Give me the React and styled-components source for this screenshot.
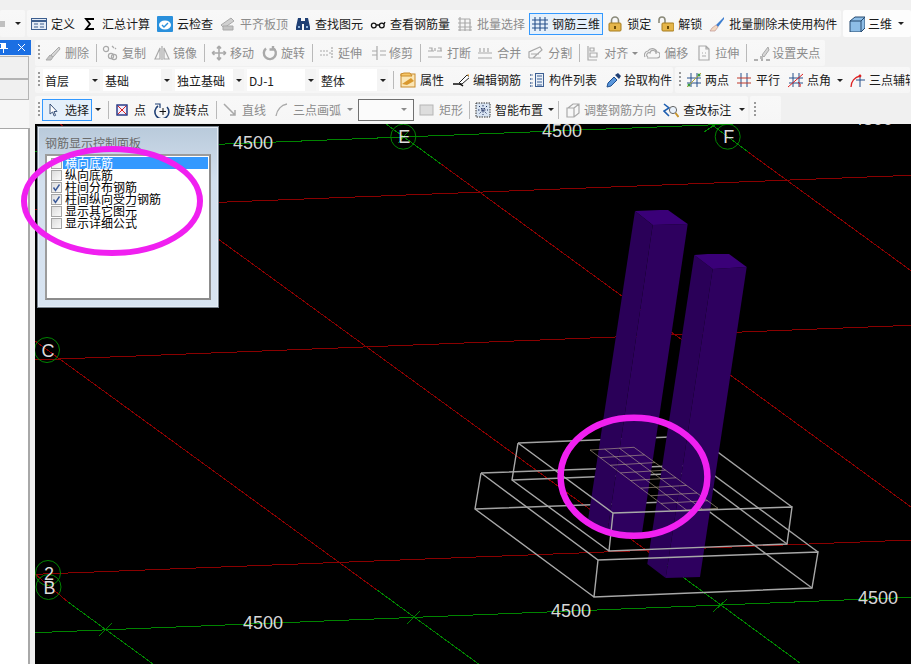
import React from "react";
import styled, { createGlobalStyle } from "styled-components";

const GlobalStyle = createGlobalStyle`
  html, body { margin: 0; padding: 0; background: #f0f0f0; }
  body { font-family: "Noto Sans CJK SC", "Liberation Sans", sans-serif; font-size: 12px; color: #1a1a1a; }
`;

const Page = styled.div`
  position: relative;
  width: 911px;
  height: 664px;
  overflow: hidden;
  background: #f0f0f0;
`;

const TopRow = styled.div`
  display: flex;
  gap: 2px;
  height: 27px;
  margin-top: 10px;
`;

const Body = styled.div`
  display: flex;
  height: 627px;
`;

const Dock = styled.div`
  width: 35px;
  flex: none;
  display: flex;
  flex-direction: column;
  padding-top: 3px;
  box-sizing: border-box;
`;

const DockTitle = styled.div`
  width: 31px;
  height: 15px;
  flex: none;
  background: #1b6fe3;
  display: flex;
  align-items: center;
  justify-content: space-between;
  padding-right: 5px;
  box-sizing: border-box;
  overflow: hidden;
  margin-bottom: 1px;
`;

const DockTab = styled.div`
  width: 29px;
  height: ${(p) => p.$h}px;
  flex: none;
  box-sizing: border-box;
  border: 1px solid #b4b4b4;
  border-left: none;
  background: #f0f0f0;
`;

const DockGap = styled.div`
  height: 28px;
  width: 29px;
  flex: none;
  background: #f6f6f6;
`;

const DockBody = styled.div`
  flex: 1;
  width: 30px;
  box-sizing: border-box;
  background: #fff;
  border-top: 1px solid #a8a8a8;
  border-right: 2px solid #a8a8a8;
`;

const Work = styled.div`
  flex: 1;
  min-width: 0;
  display: flex;
  flex-direction: column;
`;

const Rows = styled.div`
  height: 87px;
  flex: none;
  padding-top: 3px;
  box-sizing: border-box;
  display: flex;
  flex-direction: column;
  gap: 1px;
`;

const ToolRow = styled.div`
  display: flex;
  gap: 2px;
  height: ${(p) => p.$h || 26}px;
  margin-top: ${(p) => p.$mt || 0}px;
  flex: none;
`;

const Segment = styled.div`
  display: flex;
  align-items: center;
  gap: ${(p) => (p.$gap === undefined ? 2 : p.$gap)}px;
  height: 100%;
  width: ${(p) => (p.$w ? `${p.$w}px` : "auto")};
  flex: ${(p) => (p.$w ? "none" : "0 1 auto")};
  padding-left: ${(p) => (p.$pl === undefined ? 3 : p.$pl)}px;
  padding-right: ${(p) => p.$pr || 0}px;
  box-sizing: border-box;
  overflow: hidden;
  white-space: nowrap;
  background: ${(p) => p.$bg || "linear-gradient(#f8f8f8, #f6f6f6)"};
  border-radius: 2px;
`;

const Grip = styled.span`
  width: 2px;
  height: 16px;
  flex: none;
  background: repeating-linear-gradient(#9a9a9a 0 2px, transparent 2px 4px);
`;

const Sep = styled.span`
  width: 1px;
  height: 18px;
  flex: none;
  margin-left: ${(p) => (p.$ml === undefined ? 2 : p.$ml)}px;
  background: #b9b9b9;
`;

const Tool = styled.div`
  display: flex;
  align-items: center;
  gap: ${(p) => (p.$gap === undefined ? 4 : p.$gap)}px;
  height: 22px;
  padding: 0 2px;
  margin-left: ${(p) => p.$ml || 0}px;
  flex: none;
  box-sizing: border-box;
  color: ${(p) => (p.$off ? "#8c8c8c" : "#1a1a1a")};
  border: 1px solid ${(p) => (p.$active ? "#3399ff" : "transparent")};
  background: ${(p) => (p.$active ? "#e5f0fb" : "transparent")};
  line-height: 16px;
`;

const IconBox = styled.span`
  width: 16px;
  height: 16px;
  flex: none;
  display: flex;
  align-items: center;
  justify-content: center;
`;

const Caret = styled.span`
  width: 0;
  height: 0;
  flex: none;
  margin-left: ${(p) => (p.$ml === undefined ? 4 : p.$ml)}px;
  border-left: 3px solid transparent;
  border-right: 3px solid transparent;
  border-top: 3px solid ${(p) => (p.$off ? "#8c8c8c" : "#222")};
`;

const Combo = styled.div`
  width: ${(p) => p.$w}px;
  height: 22px;
  flex: none;
  display: flex;
  align-items: center;
  justify-content: space-between;
  background: #fff;
  padding: 0 0 0 2px;
  box-sizing: border-box;
`;

const ComboArrow = styled.span`
  width: 11px;
  height: 100%;
  background: #f4f4f4;
  display: flex;
  align-items: center;
  justify-content: center;
`;

const EmptyCombo = styled.div`
  width: 56px;
  height: 22px;
  flex: none;
  margin-left: 3px;
  box-sizing: border-box;
  border: 1px solid #707070;
  background: #fbfbfb;
  display: flex;
  align-items: center;
  justify-content: flex-end;
  padding-right: 6px;
`;

const Canvas = styled.div`
  position: relative;
  flex: 1;
  min-height: 0;
  background: #000;
  overflow: hidden;
`;

const Scene = styled.svg`
  display: block;
  width: 876px;
  height: 540px;
`;

const Panel = styled.div`
  position: absolute;
  left: 2px;
  top: 2px;
  width: 182px;
  height: 182px;
  box-sizing: border-box;
  border: 1px solid #76818c;
  box-shadow: inset 0 0 0 1px #e6edf5;
  background: linear-gradient(#b9cadb, #d3e0ee 30%, #d8e4f1);
`;

const PanelTitle = styled.div`
  height: 27px;
  padding: 8px 0 0 7px;
  box-sizing: border-box;
  color: #6a6a6a;
  line-height: 16px;
`;

const ListBox = styled.div`
  width: 166px;
  height: 146px;
  margin-left: 7px;
  box-sizing: border-box;
  border: 2px solid #9c9c9c;
  border-right-color: #8c8c8c;
  border-bottom-color: #8c8c8c;
  background: #fff;
  padding: 1px 1px 0 4px;
`;

const ListRow = styled.div`
  display: flex;
  height: 12px;
  line-height: 12px;
  color: #000;
`;

const Check = styled.span`
  width: 11px;
  height: 11px;
  flex: none;
  box-sizing: border-box;
  border: 1px solid #a5a5a5;
  background: linear-gradient(135deg, #dcdcdc, #fafafa);
  display: flex;
  align-items: center;
  justify-content: center;
  margin-top: 1px;
`;

const ListLabel = styled.span`
  flex: 1;
  margin-left: 1px;
  padding-left: 2px;
  color: ${(p) => (p.$selected ? "#fff" : "#000")};
  background: ${(p) => (p.$selected ? "#3399ff" : "transparent")};
`;

const Annotations = styled.svg`
  position: absolute;
  left: 0;
  top: 0;
  width: 911px;
  height: 664px;
  pointer-events: none;
`;

const G = "#a9a9a9";
const gray = { fill: "none", stroke: G, strokeWidth: 1.2 };

const ICONS = {
  define: (
    <>
      <rect x="0.5" y="2.5" width="15" height="11" fill="#e4ecf6" stroke="#3d5f8f" />
      <path d="M1 5h14" stroke="#3d5f8f" strokeWidth="2" />
      <path d="M3 8h4M3 11h4M9 8h4M9 11h4" stroke="#3d5f8f" />
    </>
  ),
  sigma: <path d="M12 3H4l4 5-4 5h8" fill="none" stroke="#000" strokeWidth="1.8" />,
  cloud: (
    <>
      <rect width="16" height="16" rx="1" fill="#2a90dc" />
      <ellipse cx="8" cy="9" rx="6" ry="4.5" fill="#fff" />
      <path d="M5 9l2 2 4-4" fill="none" stroke="#2a90dc" strokeWidth="1.4" />
    </>
  ),
  level: (
    <>
      <path d="M1 9L11 2l3 3L4 12z" fill="#d0d0d0" stroke={G} />
      <path d="M3 14V10h10v4z" fill="#c4c4c4" stroke={G} />
    </>
  ),
  binoculars: (
    <>
      <path d="M3 2h3v3h4V2h3l2 9v3H9V8H7v6H1v-3z" fill="#1f3f74" />
      <path d="M3 10h2v2H3zM11 10h2v2h-2z" fill="#8fb4dc" />
    </>
  ),
  glasses: (
    <g fill="none" stroke="#111" strokeWidth="1.3">
      <circle cx="3.8" cy="9.5" r="2.4" />
      <circle cx="11.8" cy="9.5" r="2.4" />
      <path d="M6.2 9h3.2M14 8l1-2" />
    </g>
  ),
  batch: (
    <g {...gray}>
      <path d="M1 3h12M1 7h13M1 11h14M1 14h14M3 1v14M8 3v12M13 3v12" />
    </g>
  ),
  rebar: <path d="M0 4h16M0 8h16M0 12h16M3 1v14M8 1v14M13 1v14" fill="none" stroke="#27508c" strokeWidth="1.1" />,
  lock: (
    <>
      <path d="M4.5 8V4.5a3.5 3.5 0 017 0V8" fill="none" stroke="#8a8a7a" strokeWidth="1.6" />
      <rect x="2" y="7" width="12" height="8" rx="1" fill="#e5b54a" stroke="#a67c1e" />
      <path d="M7 10h2v3H7z" fill="#6b4b08" />
    </>
  ),
  unlock: (
    <>
      <path d="M1 7V4a3 3 0 016 0v4" fill="none" stroke="#8a8a7a" strokeWidth="1.6" />
      <rect x="4" y="7" width="12" height="8" rx="1" fill="#e5b54a" stroke="#a67c1e" />
      <path d="M9 10h2v3H9z" fill="#6b4b08" />
    </>
  ),
  sweep: (
    <>
      <path d="M15 1L7 9l2 2 6-8z" fill="#3f7fcf" />
      <path d="M7 9l2 2-3 4-5 0 2-3z" fill="#f1d9c2" stroke="#b88" strokeWidth="0.6" />
    </>
  ),
  cube: (
    <>
      <path d="M1 5l5-4h10v11l-4 4H1z" fill="#8dbde6" stroke="#25496f" />
      <path d="M1 5h11v11M12 5l4-4" fill="none" stroke="#25496f" />
    </>
  ),
  erase: (
    <>
      <path d="M14 2L6 10l2 2 7-8z" fill="#d6d6d6" stroke={G} />
      <path d="M1 15l4-5 3 2-2 3z" fill="#c4c4c4" stroke={G} />
    </>
  ),
  copy: (
    <g {...gray}>
      <circle cx="4" cy="4" r="2.6" />
      <circle cx="9" cy="11" r="2.6" />
      <circle cx="12" cy="12" r="2.6" />
      <path d="M10 1l2 2M13 3l1 1" />
    </g>
  ),
  mirror: (
    <g {...gray}>
      <path d="M1 14L6 3v11zM15 14L10 3v11zM8 1v14" />
    </g>
  ),
  move: <path d="M8 1v14M1 8h14M8 1L6 3.5M8 1l2 2.5M8 15l-2-2.5M8 15l2-2.5M1 8l2.5-2M1 8l2.5 2M15 8l-2.5-2M15 8l-2.5 2" {...gray} strokeWidth="1.6" />,
  rotate: <path d="M4 3.5A6 6 0 1011 3M11 1v3.5H7.5" fill="none" stroke={G} strokeWidth="2.4" />,
  extend: <path d="M1 6h8M1 10h8M13 2v12M10 8h2" {...gray} strokeDasharray="2 1" />,
  trim: <path d="M6 1v14M1 6h5M1 10h5M9 6h6M9 10h6" {...gray} />,
  breakTool: <path d="M1 6h6M10 6h5M1 12h14M2 3h3v3M11 3h3v3M8 3v3" {...gray} />,
  merge: <path d="M1 8h14M1 13h14M3 3v4M7 3v4M11 3v4" {...gray} />,
  split: <path d="M1 13h12M1 13V7l11-5 2 3-9 8M3 9h8" {...gray} />,
  align: <path d="M2 1v14h9M4 3h4v3H4zM4 8h7v4H4z" {...gray} />,
  offset: <path d="M1 12a4 4 0 013-6 5 5 0 019 1 3 3 0 010 6H3M4 12a2 2 0 012-4 3 3 0 016 1" {...gray} />,
  stretch: <path d="M3 1h7l3 3v11H3zM10 1v3h3M6 8h1M6 11h4M9 8h1" {...gray} />,
  grips: (
    <>
      <path d="M14 2L8 10l2 2 5-7z" fill="#d6d6d6" stroke={G} />
      <path d="M0 15h4M7 15h2M12 15h4" stroke="#999" strokeWidth="1.5" />
      <rect x="6" y="11" width="3" height="3" fill="#bbb" />
    </>
  ),
  props: (
    <>
      <rect x="1" y="2" width="14" height="13" fill="#fbe6b5" stroke="#c88a2b" />
      <path d="M1 2l3-1h6l2 3H1z" fill="#f5c566" stroke="#c88a2b" />
      <path d="M2 12L11 6l3 3-7 4z" fill="#d9982e" />
    </>
  ),
  editRebar: (
    <>
      <path d="M0 12h6c2 0 3 1 4 2" fill="none" stroke="#111" strokeWidth="1.4" />
      <path d="M6 11L14 3l3 2-8 7z" fill="#fff" stroke="#222" />
      <path d="M14 3l3 2 0-3z" fill="#d9982e" />
    </>
  ),
  list: (
    <g fill="none" stroke="#3c5f93">
      <rect x="6.5" y="1.5" width="8" height="13" fill="#e9f0f8" />
      <path d="M8 4h5M8 7h5M8 10h5M8 13h5" />
      <path d="M1 3h3M1 7h3M1 11h3M1 14h3" strokeDasharray="1.5 1" strokeWidth="1.5" />
    </g>
  ),
  pick: (
    <>
      <path d="M1 15l1-4 6-6 3 3-6 6z" fill="#5a97dc" stroke="#1f4f8f" />
      <path d="M9 3l3-2 3 3-2 3z" fill="#1f3f74" />
    </>
  ),
  twoPoint: (
    <>
      <path d="M5 1v14M11 1v14M1 6h14M1 11h14" fill="none" stroke="#27508c" />
      <path d="M1 15L15 1" stroke="#b7a63a" />
      <circle cx="3" cy="13" r="1.5" fill="#3a9a3a" />
      <circle cx="13" cy="3" r="1.5" fill="#3a9a3a" />
    </>
  ),
  parallel: <g fill="none"><path d="M5 1v14M11 1v14" stroke="#27508c" /><path d="M1 6h14M1 11h14" stroke="#c0392b" /></g>,
  angle: (
    <>
      <path d="M5 1v14M11 1v14M1 6h14M1 11h14" fill="none" stroke="#27508c" />
      <path d="M0 15L15 2M12 15a4 4 0 00-2-5" fill="none" stroke="#d22" />
    </>
  ),
  threePoint: (
    <>
      <path d="M2 15a11 11 0 019-11" fill="none" stroke="#d22" strokeWidth="1.3" />
      <path d="M7 8h9M11 3v12" fill="none" stroke="#27508c" />
      <circle cx="11" cy="4" r="1.4" fill="#d22" />
    </>
  ),
  cursor: <path d="M5 2v10l2.6-2 1.6 4 1.4-.6-1.6-3.8 3-.2z" fill="#fff" stroke="#39527a" />,
  point: (
    <>
      <rect x="3" y="3" width="10" height="10" fill="#eef" stroke="#1f2f7f" strokeWidth="1.4" />
      <path d="M4 4l8 8M12 4l-8 8" stroke="#d22" />
    </>
  ),
  rotatePoint: (
    <>
      <path d="M4 4a7 7 0 109 1" fill="none" stroke="#1f3f74" strokeWidth="1.6" />
      <path d="M1 2h5v4" fill="none" stroke="#1f3f74" strokeWidth="1.2" />
      <path d="M9 6v7M5.5 9.5H12" stroke="#111" />
    </>
  ),
  line: <path d="M2 2l11 11M13 8v5H8" {...gray} strokeWidth="1.5" />,
  arc: <path d="M2 14C3 8 7 3 13 2" {...gray} strokeWidth="1.4" />,
  rect: <rect x="1" y="3" width="13" height="10" fill="#ddd" stroke="#b5b5b5" />,
  smart: (
    <>
      <rect x="1" y="1" width="14" height="14" fill="#d8e4f2" stroke="#333" strokeDasharray="1.5 1" />
      <path d="M8 3v10M3 8h10M4 4l8 8M12 4l-8 8" stroke="#1f2f5f" strokeDasharray="1.5 1.5" />
    </>
  ),
  adjust: <path d="M3 6l5-4h6v9l-5 4H2V6h7v9M9 6l5-4" {...gray} />,
  inspect: (
    <>
      <path d="M1 2l5 4-5 3 5 5" fill="none" stroke="#1f5fb0" strokeWidth="1.6" />
      <circle cx="10" cy="8" r="3.6" fill="#e8f1fb" stroke="#666" />
      <path d="M12.5 11l3 4" stroke="#c9952b" strokeWidth="2" />
    </>
  ),
};

const Icon = ({ name }) => (
  <IconBox>
    <svg width="16" height="16" viewBox="0 0 16 16">
      {ICONS[name]}
    </svg>
  </IconBox>
);

const ToolItem = ({ icon, off, active, ml, gap, children }) => (
  <Tool $off={off} $active={active} $ml={ml} $gap={gap}>
    {icon && <Icon name={icon} />}
    {children && <span>{children}</span>}
  </Tool>
);

const LIST = [
  { label: "横向底筋", selected: true },
  { label: "纵向底筋" },
  { label: "柱间分布钢筋", checked: true },
  { label: "柱间纵向受力钢筋", checked: true },
  { label: "显示其它图元" },
  { label: "显示详细公式" },
];

const RED = "#8a0000";
const GREEN = "#008400";

// canvas lines, page coordinates
const GRID = [
  [35, 151.5, 911, 117, GREEN],
  [35, 209.5, 911, 175.3, RED],
  [35, 360, 911, 325.3, RED],
  [35, 574.3, 911, 540, RED],
  [35, 632.7, 911, 597.3, GREEN],
  [386, 124, 441, 164, GREEN],
  [441, 164, 911, 507, RED],
  [60, 124, 650, 553, RED],
  [650, 553, 800, 663, GREEN],
  [711, 124, 748, 152, GREEN],
  [748, 152, 911, 270.7, RED],
  [35, 341, 377, 590, RED],
  [377, 590, 480, 665, GREEN],
  [35, 574, 68, 602, RED],
  [68, 602, 153, 664, GREEN],
  [99, 636, 112, 623, GREEN],
  [407, 624, 420, 611, GREEN],
  [713, 612, 727, 599, GREEN],
  [398, 143, 408, 132, GREEN],
  [704, 132, 716, 124, GREEN],
];

const BEHIND = "M518 443L696 436L792 507M512 480L692 473L787 544M481 473L700 465L818 552M475 509L695 501L812 588";
const FRONT =
  "M518 443L613 513L792 507L787 544L609 551L613 513M518 443L512 480L609 551M481 473L598 560L818 552L812 588L594 597L598 560M481 473L475 509L594 597";

const LABELS = [
  ["4500", 233, 149],
  ["4500", 542, 137],
  ["4500", 853, 125],
  ["4500", 243, 629],
  ["4500", 551, 617],
  ["4500", 858, 604],
];

const AXES = [
  ["E", 403.3, 136.7],
  ["F", 727.7, 136.7],
  ["C", 47, 350],
  ["2", 48, 573],
  ["B", 48.5, 587],
];

const P0 = [590, 450];
const P1 = [634, 447.3];
const P2 = [718, 508.3];
const P3 = [671, 511];
const mix = (a, b, t) => [a[0] + (b[0] - a[0]) * t, a[1] + (b[1] - a[1]) * t];

const meshLines = () => {
  const out = [];
  for (let i = 0; i <= 3; i++) {
    const t = i / 3;
    out.push([mix(P0, P1, t), mix(P3, P2, t)]);
  }
  for (let i = 0; i <= 8; i++) {
    const t = i / 8;
    out.push([mix(P0, P3, t), mix(P1, P2, t)]);
  }
  return out;
};

const App = () => {
  return (
    <Page>
      <GlobalStyle />
      <TopRow>
        <Segment $w={25} $pl={0} $gap={0}>
          <svg width="6" height="10" viewBox="0 0 6 10">
            <path d="M0 2h5v6H0z" fill="#c0c0c0" />
          </svg>
          <Caret $ml={9} />
        </Segment>
        <Segment $gap={1} $w={814} $pl={1}>
          <ToolItem icon="define">定义</ToolItem>
          <ToolItem icon="sigma">汇总计算</ToolItem>
          <ToolItem icon="cloud">云检查</ToolItem>
          <ToolItem icon="level" off>平齐板顶</ToolItem>
          <ToolItem icon="binoculars">查找图元</ToolItem>
          <ToolItem icon="glasses">查看钢筋量</ToolItem>
          <ToolItem icon="batch" off>批量选择</ToolItem>
          <ToolItem icon="rebar" active>钢筋三维</ToolItem>
          <ToolItem icon="lock">锁定</ToolItem>
          <ToolItem icon="unlock">解锁</ToolItem>
          <ToolItem icon="sweep">批量删除未使用构件</ToolItem>
        </Segment>
        <Segment $w={68} $pl={3} $gap={0} $bg="#fdfdfd">
          <ToolItem icon="cube" gap={3}>三维</ToolItem>
          <Caret $ml={3} />
        </Segment>
      </TopRow>
      <Body>
        <Dock>
          <DockTitle>
            <svg width="8" height="11" viewBox="0 0 8 11">
              <path d="M0 1h6v5h2v1H4v4H3V7H0V6h1V2H0z" fill="#fff" />
            </svg>
            <svg width="9" height="9" viewBox="0 0 9 9">
              <path d="M1 1l7 7M8 1L1 8" stroke="#fff" />
            </svg>
          </DockTitle>
          <DockTab $h={23} />
          <DockTab $h={21} />
          <DockGap />
          <DockBody />
        </Dock>
        <Work>
          <Rows>
            <ToolRow>
              <Segment $w={790} $pl={3}>
                <Grip />
                <ToolItem icon="erase" off>删除</ToolItem>
                <Sep />
                <ToolItem icon="copy" off>复制</ToolItem>
                <ToolItem icon="mirror" off gap={3}>镜像</ToolItem>
                <Sep />
                <ToolItem icon="move" off ml={1} gap={3}>移动</ToolItem>
                <ToolItem icon="rotate" off gap={3}>旋转</ToolItem>
                <Sep />
                <ToolItem icon="extend" off ml={1} gap={3}>延伸</ToolItem>
                <ToolItem icon="trim" off ml={1} gap={2}>修剪</ToolItem>
                <Sep />
                <ToolItem icon="breakTool" off ml={1}>打断</ToolItem>
                <ToolItem icon="merge" off ml={-2}>合并</ToolItem>
                <ToolItem icon="split" off ml={-1}>分割</ToolItem>
                <Sep />
                <ToolItem icon="align" off ml={1} gap={2}>对齐</ToolItem>
                <Caret $off $ml={-1} />
                <ToolItem icon="offset" off ml={1}>偏移</ToolItem>
                <ToolItem icon="stretch" off gap={3}>拉伸</ToolItem>
                <Sep />
                <ToolItem icon="grips" off ml={2} gap={2}>设置夹点</ToolItem>
              </Segment>
            </ToolRow>
            <ToolRow>
              <Segment $w={638} $gap={3}>
                <Grip />
                {[
                  ["首层", 57],
                  ["基础", 69],
                  ["独立基础", 69],
                  ["DJ-1", 69],
                  ["整体", 69],
                ].map(([text, w]) => (
                  <Combo key={text} $w={w}>
                    {text}
                    <ComboArrow>
                      <Caret $ml={0} />
                    </ComboArrow>
                  </Combo>
                ))}
                <Sep $ml={2} />
                <ToolItem icon="props">属性</ToolItem>
                <ToolItem icon="editRebar">编辑钢筋</ToolItem>
                <ToolItem icon="list" ml={-1}>构件列表</ToolItem>
                <ToolItem icon="pick" gap={2}>拾取构件</ToolItem>
              </Segment>
              <Segment $w={235} $gap={1} $pl={4}>
                <Grip />
                <ToolItem icon="twoPoint" ml={1} gap={3}>两点</ToolItem>
                <ToolItem icon="parallel">平行</ToolItem>
                <ToolItem icon="angle" ml={1} gap={3}>点角</ToolItem>
                <Caret $ml={2} />
                <ToolItem icon="threePoint" ml={2}>三点辅轴</ToolItem>
              </Segment>
            </ToolRow>
            <ToolRow $h={27} $mt={2}>
              <Segment $w={713}>
                <Grip />
                <ToolItem icon="cursor" active>选择</ToolItem>
                <Caret $ml={1} />
                <Sep $ml={5} />
                <ToolItem icon="point">点</ToolItem>
                <ToolItem icon="rotatePoint" gap={3}>旋转点</ToolItem>
                <Sep />
                <ToolItem icon="line" off>直线</ToolItem>
                <ToolItem icon="arc" off gap={3}>三点画弧</ToolItem>
                <Caret $off $ml={1} />
                <EmptyCombo>
                  <Caret $off $ml={0} />
                </EmptyCombo>
                <ToolItem icon="rect" off>矩形</ToolItem>
                <Sep $ml={1} />
                <ToolItem icon="smart">智能布置</ToolItem>
                <Caret $ml={0} />
                <Sep $ml={2} />
                <ToolItem icon="adjust" off ml={1} gap={3}>调整钢筋方向</ToolItem>
                <ToolItem icon="inspect" ml={-1}>查改标注</ToolItem>
                <Caret $ml={3} />
              </Segment>
              <Segment $w={31} $pl={4}>
                <Grip />
              </Segment>
            </ToolRow>
          </Rows>
          <Canvas>
            <Scene viewBox="35 124 876 540">
              <g shapeRendering="crispEdges">
                {GRID.map(([x1, y1, x2, y2, c], i) => (
                  <line key={i} x1={x1} y1={y1} x2={x2} y2={y2} stroke={c} />
                ))}
              </g>
              {AXES.map(([t, x, y]) => (
                <circle key={t} cx={x} cy={y} r="12.5" fill="none" stroke={GREEN} />
              ))}
              <path d={BEHIND} fill="none" stroke="#a2a2a2" strokeWidth="1.4" />

              <path d="M652.7 225L687.7 224L642 533L607 535Z" fill="#2e005f" />
              <path d="M635 211L660 210L668 210L687.7 224L652.7 225Z" fill="#3a0078" />
              <path d="M635 211L652.7 225L607 535L588 520Z" fill="#2a0058" />
              <path d="M694.3 255L647.3 564L665.7 578L712.7 269Z" fill="#2a0058" />
              <path d="M712.7 269L746.7 267L700 577L665.7 578Z" fill="#2e005f" />
              <path d="M694.3 255L707.7 254L729 254L746.7 267L712.7 269Z" fill="#3a0078" />

              <path d={FRONT} fill="none" stroke="#a8a8a8" strokeWidth="1.4" />
              {meshLines().map(([a, b], i) => (
                <line key={i} x1={a[0]} y1={a[1]} x2={b[0]} y2={b[1]} stroke="#b8a890" strokeOpacity="0.6" />
              ))}
              {LABELS.map(([t, x, y], i) => (
                <text key={i} x={x} y={y} fill="#d8d8d8" fontFamily="Liberation Sans, sans-serif" fontSize="18">
                  {t}
                </text>
              ))}
              {AXES.map(([t, x, y]) => (
                <text key={t} x={x + 1} y={y + 6.5} textAnchor="middle" fill="#dcdcdc" fontFamily="Liberation Sans, sans-serif" fontSize="18">
                  {t}
                </text>
              ))}
            </Scene>
            <Panel>
              <PanelTitle>钢筋显示控制面板</PanelTitle>
              <ListBox>
                {LIST.map((item) => (
                  <ListRow key={item.label}>
                    <Check>
                      {item.checked && (
                        <svg width="9" height="9" viewBox="0 0 9 9">
                          <path d="M1.5 4.5L3.5 7.5L7.5 1.5" fill="none" stroke="#3b5a9a" strokeWidth="1.4" />
                        </svg>
                      )}
                    </Check>
                    <ListLabel $selected={item.selected}>{item.label}</ListLabel>
                  </ListRow>
                ))}
              </ListBox>
            </Panel>
          </Canvas>
        </Work>
      </Body>
      <Annotations viewBox="0 0 911 664">
        <ellipse cx="112" cy="201" rx="88" ry="52" fill="none" stroke="#f020f0" strokeWidth="6" />
        <ellipse cx="634" cy="476.7" rx="73.4" ry="59" fill="none" stroke="#f020f0" strokeWidth="6.5" />
      </Annotations>
    </Page>
  );
};

export default App;
